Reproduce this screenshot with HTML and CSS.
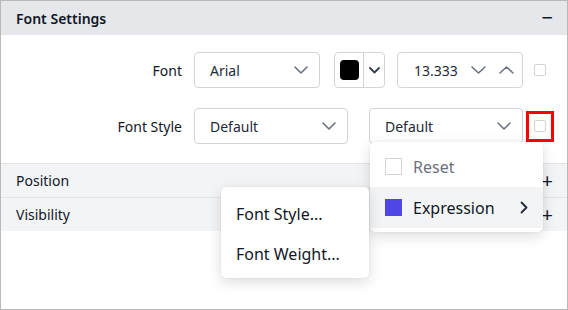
FILE: index.html
```html
<!DOCTYPE html>
<html lang="en">
<head>
    <meta charset="UTF-8">
    <meta name="viewport" content="width=device-width, initial-scale=1.0">
    <title>Font Settings</title>
    <link rel="stylesheet" href="styles.css">
</head>
<body>

    <div class="panel">
        <!-- Expanded section -->
        <div class="section-head open">
            <span>Font Settings</span>
            <span class="toggle">&minus;</span>
        </div>

        <div class="section-body">
            <div class="row">
                <label class="row-label">Font</label>
                <div class="select narrow">
                    <span>Arial</span>
                    <svg class="chev" width="14" height="8" viewBox="0 0 14 8"><path d="M1 1l6 6 6-6" /></svg>
                </div>
                <div class="color-pick">
                    <span class="swatch"></span>
                    <span class="color-arrow">
                        <svg class="chev dark" width="11" height="7" viewBox="0 0 11 7"><path d="M1 1l4.5 4.5L10 1" /></svg>
                    </span>
                </div>
                <div class="number">
                    <span class="num-value">13.333</span>
                    <svg class="chev" width="15" height="8" viewBox="0 0 15 8"><path d="M1 1l6.5 6 6.5-6" /></svg>
                    <svg class="chev" width="15" height="8" viewBox="0 0 15 8"><path d="M1 7l6.5-6 6.5 6" /></svg>
                </div>
                <span class="check-cell"><span class="check"></span></span>
            </div>

            <div class="row">
                <label class="row-label">Font Style</label>
                <div class="select wide">
                    <span>Default</span>
                    <svg class="chev" width="14" height="8" viewBox="0 0 14 8"><path d="M1 1l6 6 6-6" /></svg>
                </div>
                <div class="select wide gap-left">
                    <span>Default</span>
                    <svg class="chev" width="14" height="8" viewBox="0 0 14 8"><path d="M1 1l6 6 6-6" /></svg>
                </div>
                <span class="check-cell marked"><span class="check"></span></span>
            </div>
        </div>

        <!-- Collapsed sections -->
        <div class="section-head closed">
            <span>Position</span>
            <span class="toggle">+</span>
        </div>
        <div class="section-head closed">
            <span>Visibility</span>
            <span class="toggle">+</span>
        </div>

        <!-- Context menu for the checkbox -->
        <div class="menu check-menu">
            <div class="menu-item muted">
                <span class="box"></span>
                <span>Reset</span>
            </div>
            <div class="menu-item active">
                <span class="box filled"></span>
                <span class="grow">Expression</span>
                <svg class="sub-arrow" width="8" height="13" viewBox="0 0 8 13"><path d="M1.5 1.5l5 5-5 5" /></svg>
            </div>
        </div>

        <!-- Submenu -->
        <div class="menu sub-menu">
            <div class="menu-item plain">Font Style...</div>
            <div class="menu-item plain">Font Weight...</div>
        </div>
    </div>

</body>
</html>
```

FILE: styles.css
```css
body {
    margin: 0;
    font-family: "Noto Sans", "Open Sans", sans-serif;
    font-size: 14px;
    color: #111827;
    background-color: white;
}

.panel {
    position: relative;
    width: 568px;
    height: 310px;
    box-sizing: border-box;
    border: 1px solid #b9b9b9;
    overflow: hidden;
}

/* Section headers */
.section-head {
    display: flex;
    justify-content: space-between;
    align-items: center;
    padding: 0 14px 0 15px;
    box-sizing: border-box;
}

.section-head.open {
    height: 34px;
    background-color: #e5e7eb;
    font-weight: 600;
}

.section-head.closed {
    height: 34px;
    background-color: #f3f4f6;
    border-top: 1px solid #e1e3e7;
}

.section-head.closed:last-of-type {
    border-bottom: 1px solid #e1e3e7;
}

.toggle {
    font-size: 20px;
    font-weight: 400;
    line-height: 1;
}

.section-body {
    padding: 17px 0 19px;
}

.row {
    display: flex;
    align-items: center;
    height: 36px;
}

.row + .row {
    margin-top: 20px;
}

.row-label {
    width: 181px;
    text-align: right;
    margin-right: 12px;
}

/* Inputs */
.select,
.number,
.color-pick {
    display: flex;
    align-items: center;
    height: 36px;
    box-sizing: border-box;
    border: 1px solid #d1d5db;
    border-radius: 4px;
    background-color: white;
}

.select {
    justify-content: space-between;
    padding: 0 11px 0 15px;
    color: #1f2937;
}

.select.narrow {
    width: 126px;
}

.select.wide {
    width: 154px;
}

.select.gap-left {
    margin-left: 21px;
}

.chev {
    fill: none;
    stroke: #6b7280;
    stroke-width: 1.6;
    stroke-linecap: round;
    stroke-linejoin: round;
}

.chev.dark {
    stroke: #374151;
    stroke-width: 1.8;
}

.color-pick {
    width: 51px;
    margin-left: 14px;
}

.swatch {
    width: 19px;
    height: 20px;
    margin-left: 5px;
    border-radius: 4px;
    background-color: black;
}

.color-arrow {
    display: flex;
    align-items: center;
    justify-content: center;
    height: 100%;
    margin-left: 4px;
    padding-left: 5px;
    border-left: 1px solid #d1d5db;
}

.number {
    width: 126px;
    margin-left: 12px;
    padding: 0 8px 0 16px;
    gap: 13px;
    color: #1f2937;
}

.num-value {
    flex: 1;
}

.check-cell {
    display: flex;
    align-items: center;
    justify-content: center;
    width: 28px;
    height: 31px;
    box-sizing: border-box;
    margin-left: 3px;
    border: 3px solid transparent;
}

.check-cell.marked {
    border-color: #ff0000;
}

.check {
    width: 12px;
    height: 12px;
    box-sizing: border-box;
    border: 1px solid #d1d5db;
    border-radius: 2px;
}

/* Menus */
.menu {
    position: absolute;
    background-color: white;
    border-radius: 5px;
    padding: 4px 0;
    box-shadow: 0 4px 14px rgba(0, 0, 0, 0.14), 0 0 2px rgba(0, 0, 0, 0.08);
    font-size: 16px;
}

.check-menu {
    left: 369px;
    top: 141px;
    width: 173px;
}

.sub-menu {
    left: 220px;
    top: 186px;
    width: 148px;
    padding: 7px 0 4px;
}

.menu-item {
    display: flex;
    align-items: center;
    height: 41px;
    padding: 0 15px;
    color: #111827;
}

.menu-item.plain {
    height: 40px;
}

.menu-item.muted {
    color: #6b7280;
}

.menu-item.active {
    background-color: #f3f4f6;
}

.box {
    width: 17px;
    height: 17px;
    box-sizing: border-box;
    margin-right: 11px;
    border: 1px solid #d1d5db;
}

.box.filled {
    border: none;
    background-color: #4f46e5;
}

.grow {
    flex: 1;
}

.sub-arrow {
    fill: none;
    stroke: #1f2937;
    stroke-width: 1.8;
    stroke-linecap: round;
    stroke-linejoin: round;
}
```
